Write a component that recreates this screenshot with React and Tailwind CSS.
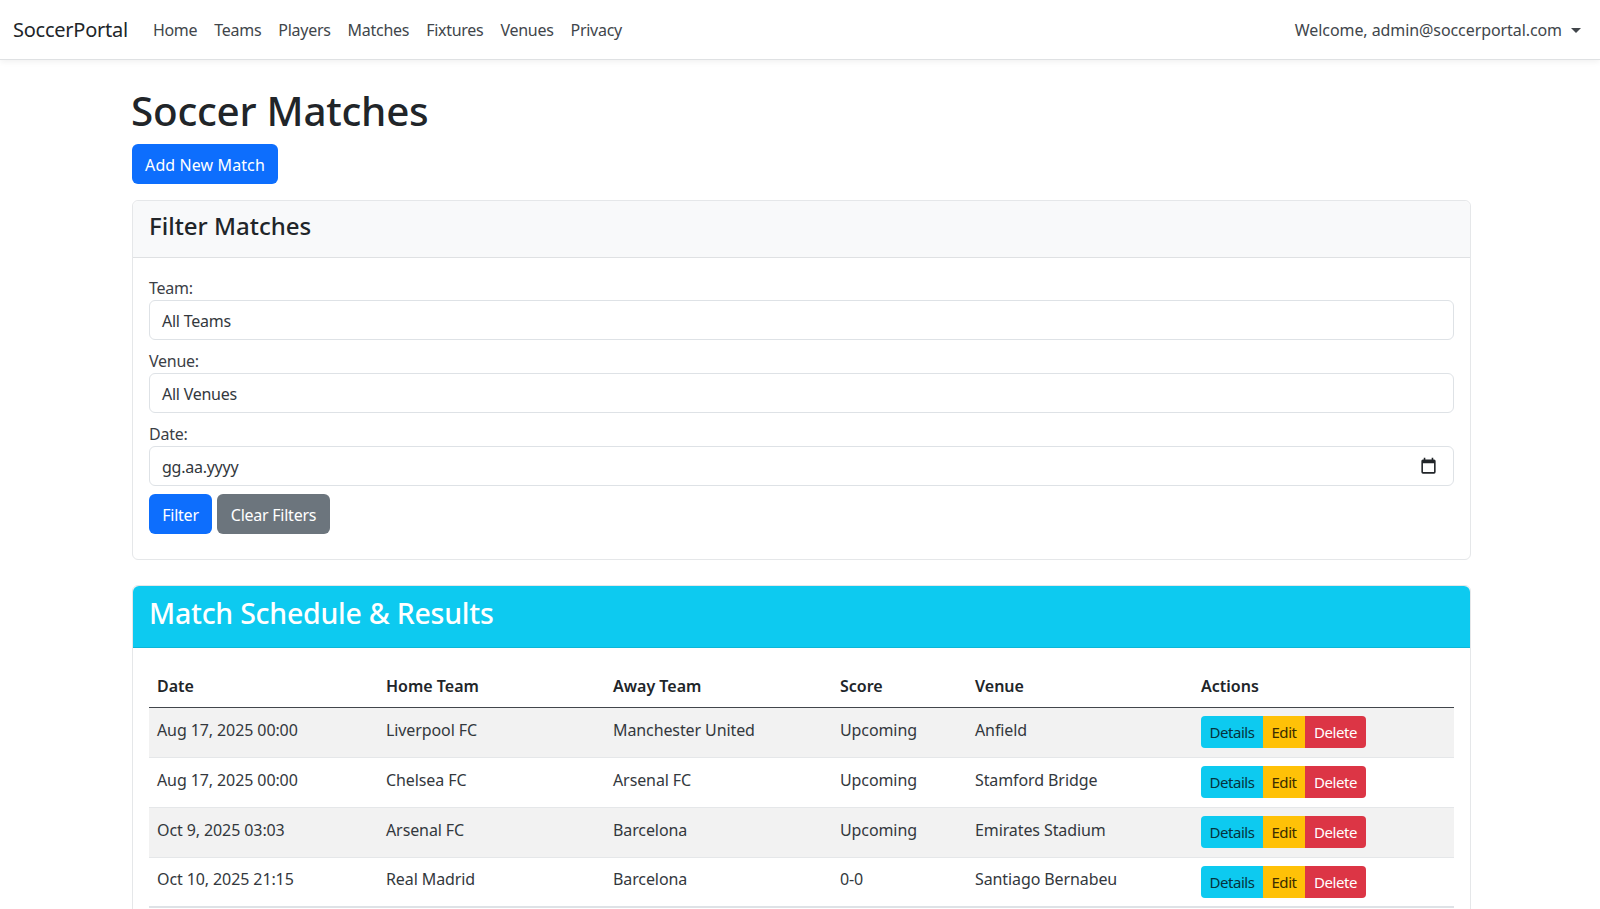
const navLinks = ['Home', 'Teams', 'Players', 'Matches', 'Fixtures', 'Venues', 'Privacy']

const matches = [
    { date: 'Aug 17, 2025 00:00', home: 'Liverpool FC', away: 'Manchester United', score: 'Upcoming', venue: 'Anfield' },
    { date: 'Aug 17, 2025 00:00', home: 'Chelsea FC', away: 'Arsenal FC', score: 'Upcoming', venue: 'Stamford Bridge' },
    { date: 'Oct 9, 2025 03:03', home: 'Arsenal FC', away: 'Barcelona', score: 'Upcoming', venue: 'Emirates Stadium' },
    { date: 'Oct 10, 2025 21:15', home: 'Real Madrid', away: 'Barcelona', score: '0-0', venue: 'Santiago Bernabeu' },
]

function Field({ label, value, children }) {
    return (
        <div className="mb-[8px]">
            <div className="h-[24px] mb-[1px] pt-[1px] leading-[24px] text-[#3b4046]">{label}</div>
            <div className="h-[40px] border border-[#dee2e6] rounded-[6px] pl-[12px] pr-[15px] flex items-center justify-between text-[#33383d]">
                <span className="pt-[2px]">{value}</span>
                {children}
            </div>
        </div>
    )
}

function ActionButtons() {
    return (
        <div className="flex h-[32px] w-fit text-[15px] leading-[32px] tracking-[-0.45px]">
            <span className="w-[62px] text-center bg-[#0dcaf0] text-[#06333d] rounded-l-[4px]">Details</span>
            <span className="w-[42px] text-center bg-[#ffc107] text-[#3a2c02]">Edit</span>
            <span className="w-[61px] text-center bg-[#dc3545] text-white rounded-r-[4px]">Delete</span>
        </div>
    )
}

export default function App() {
    return (
        <div className="h-[909px] overflow-hidden bg-white text-[#212529] text-[16px] font-['Noto_Sans',sans-serif] tracking-[-0.25px]">
            <nav className="h-[60px] flex items-center justify-between pl-[13px] pr-[19px] border-b border-[#dfe1e3] shadow-[0_2px_6px_rgba(0,0,0,0.06)]">
                <div className="flex items-center pt-[1px]">
                    <span className="text-[20px] mr-[25px]">SoccerPortal</span>
                    <div className="flex gap-[17px] text-[#41464b] tracking-[-0.28px]">
                        {navLinks.map(link => <span key={link}>{link}</span>)}
                    </div>
                </div>
                <div className="flex items-center text-[#41464b] pt-[1px]">
                    <span className="tracking-[-0.08px]">Welcome, admin@soccerportal.com</span>
                    <span className="ml-[9px] border-t-[5px] border-x-[5px] border-t-[#41464b] border-x-transparent" />
                </div>
            </nav>

            <main className="w-[1339px] ml-[132px]">
                <h1 className="mt-[24px] -ml-[1px] h-[60px] text-[40.4px] leading-[54px] font-medium">Soccer Matches</h1>
                <button className="h-[40px] w-[146px] pt-[1px] rounded-[6px] bg-[#0d6efd] text-white tracking-[0.1px]">Add New Match</button>

                <section className="mt-[16px] h-[360px] border border-[#e5e7e9] rounded-[6px]">
                    <div className="h-[57px] pb-[6px] bg-[#f8f9fa] border-b border-[#dfe1e3] rounded-t-[6px] px-[16px] flex items-center">
                        <h2 className="text-[24px] font-medium tracking-[0px]">Filter Matches</h2>
                    </div>
                    <div className="px-[16px] pt-[17px]">
                        <Field label="Team:" value="All Teams" />
                        <Field label="Venue:" value="All Venues" />
                        <Field label="Date:" value="gg.aa.yyyy">
                            <svg className="w-[19px] h-[19px]" viewBox="0 0 24 24" fill="#212529">
                                <path d="M19 3h-1V1h-2v2H8V1H6v2H5a2 2 0 0 0-2 2v14a2 2 0 0 0 2 2h14a2 2 0 0 0 2-2V5a2 2 0 0 0-2-2zm0 16H5V8h14v11z" />
                            </svg>
                        </Field>
                        <div className="flex gap-[5px]">
                            <button className="h-[40px] w-[63px] pt-[1px] rounded-[6px] bg-[#0d6efd] text-white">Filter</button>
                            <button className="h-[40px] w-[113px] pt-[1px] rounded-[6px] bg-[#6c757d] text-white">Clear Filters</button>
                        </div>
                    </div>
                </section>

                <section className="mt-[25px] border border-[#e5e7e9] rounded-[6px] h-[400px]">
                    <div className="h-[62px] pb-[7px] bg-[#0dcaf0] rounded-t-[6px] px-[16px] flex items-center border-b border-[#0cb6d8]">
                        <h2 className="text-[28.5px] font-medium text-white">Match Schedule &amp; Results</h2>
                    </div>
                    <div className="px-[16px] pt-[16px] tracking-[-0.1px]">
                        <table className="w-full table-fixed border-collapse border-b-[2px] border-[#dee2e6]">
                            <thead>
                                <tr className="h-[43px] border-b border-[#41464b] text-left tracking-[0px]">
                                    <th className="w-[229px] px-[8px] pt-[2px] font-semibold">Date</th>
                                    <th className="w-[227px] px-[8px] pt-[2px] font-semibold">Home Team</th>
                                    <th className="w-[227px] px-[8px] pt-[2px] font-semibold">Away Team</th>
                                    <th className="w-[135px] px-[8px] pt-[2px] font-semibold">Score</th>
                                    <th className="w-[226px] px-[8px] pt-[2px] font-semibold">Venue</th>
                                    <th className="px-[8px] pt-[2px] font-semibold">Actions</th>
                                </tr>
                            </thead>
                            <tbody>
                                {matches.map((m, i) => (
                                    <tr key={i} className={`h-[50px] border-b border-[#e5e7e9] text-[#33383d] ${i % 2 === 0 ? 'bg-[#f2f2f2]' : 'bg-white'}`}>
                                        <td className="px-[8px] pb-[5px]">{m.date}</td>
                                        <td className="px-[8px] pb-[5px]">{m.home}</td>
                                        <td className="px-[8px] pb-[5px]">{m.away}</td>
                                        <td className="px-[8px] pb-[5px]">{m.score}</td>
                                        <td className="px-[8px] pb-[5px]">{m.venue}</td>
                                        <td className="px-[8px]"><ActionButtons /></td>
                                    </tr>
                                ))}
                            </tbody>
                        </table>
                    </div>
                </section>
            </main>
        </div>
    )
}
